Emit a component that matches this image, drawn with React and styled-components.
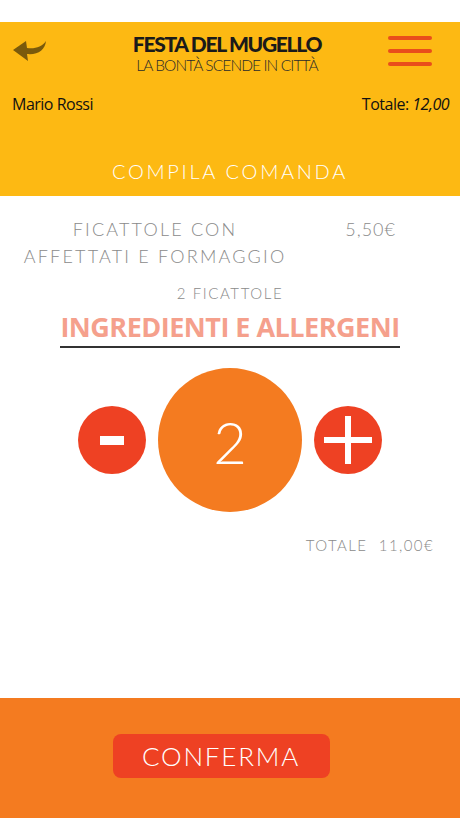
import React from "react";
import styled, { createGlobalStyle } from "styled-components";

const Global = createGlobalStyle`
  html, body { margin: 0; padding: 0; background: #fff; }
  body { font-family: "Lato", "Open Sans", sans-serif; }
  * { box-sizing: border-box; }
`;

const Screen = styled.div`
  width: 460px;
  height: 818px;
  display: flex;
  flex-direction: column;
  background: #fff;
  overflow: hidden;
`;

const StatusGap = styled.div`
  height: 22px;
  background: #fff;
`;

const Header = styled.header`
  height: 174px;
  background: #fdb913;
  display: flex;
  flex-direction: column;
`;

const TopBar = styled.div`
  display: flex;
  align-items: flex-start;
  justify-content: space-between;
  padding: 13px 28px 0 12px;
  height: 66px;
`;

const IconBtn = styled.div`
  width: ${(p) => p.$w}px;
  height: ${(p) => p.$h}px;
  margin-top: ${(p) => p.$mt || 0}px;
  display: flex;
`;

const Brand = styled.div`
  display: flex;
  flex-direction: column;
  align-items: center;
  margin-top: -1px;
  margin-left: 18px;
`;

const BrandTitle = styled.div`
  font-family: "Lato", sans-serif;
  font-weight: 900;
  font-size: 21px;
  letter-spacing: -1.3px;
  color: #1a1a1a;
  line-height: 20px;
`;

const BrandSub = styled.div`
  font-family: "Lato", sans-serif;
  font-weight: 300;
  font-size: 15.5px;
  letter-spacing: -0.9px;
  color: #2a2a2a;
  line-height: 16px;
  margin-top: 3px;
`;

const UserRow = styled.div`
  display: flex;
  justify-content: space-between;
  padding: 5px 11px 0 12px;
  font-family: "Open Sans", sans-serif;
  font-size: 16px;
  color: #111;
  letter-spacing: -0.5px;
`;

const Italic = styled.span`
  font-style: italic;
`;

const SectionTitle = styled.div`
  margin-top: auto;
  padding-bottom: 13px;
  text-align: center;
  color: #fff;
  font-family: "Lato", sans-serif;
  font-weight: 300;
  font-size: 20px;
  letter-spacing: 2.7px;
`;

const Body = styled.main`
  flex: 1;
  display: flex;
  flex-direction: column;
  align-items: center;
  color: #8a8a8a;
  font-family: "Lato", sans-serif;
  font-weight: 300;
`;

const ItemRow = styled.div`
  align-self: stretch;
  display: grid;
  grid-template-columns: 1fr auto;
  padding: 20px 64px 0 24px;
`;

const ItemName = styled.div`
  display: flex;
  flex-direction: column;
  align-items: center;
  width: 262px;
`;

const NameLine = styled.span`
  font-size: 18px;
  letter-spacing: 2.2px;
  line-height: 27px;
  white-space: nowrap;
`;

const Price = styled.div`
  font-size: 18px;
  letter-spacing: 1px;
  line-height: 27px;
`;

const Count = styled.div`
  font-size: 15px;
  letter-spacing: 1.6px;
  margin-top: 14px;
`;

const Link = styled.div`
  margin-top: 8px;
  font-family: "Open Sans", sans-serif;
  font-weight: 700;
  font-size: 27px;
  letter-spacing: -0.5px;
  color: #f5a08c;
  line-height: 34px;
  padding: 0 0 2px;
  border-bottom: 2px solid #333;
`;

const Stepper = styled.div`
  display: flex;
  align-items: center;
  gap: 12px;
  margin-top: 20px;
`;

const Round = styled.div`
  width: ${(p) => p.$size}px;
  height: ${(p) => p.$size}px;
  border-radius: 50%;
  background: ${(p) => p.$bg};
  display: flex;
  align-items: center;
  justify-content: center;
  color: #fff;
`;

const Qty = styled.span`
  font-family: "Lato", sans-serif;
  font-weight: 300;
  font-size: 58px;
  line-height: 1;
  color: #fff;
  margin-top: 4px;
`;

const Total = styled.div`
  align-self: flex-end;
  margin: 24px 26px 0 0;
  font-size: 15px;
  letter-spacing: 1.4px;
  word-spacing: 6px;
`;

const Footer = styled.footer`
  height: 120px;
  background: #f47b20;
  display: flex;
  justify-content: center;
  padding: 36px 18px 0 0;
`;

const Confirm = styled.button`
  width: 217px;
  height: 44px;
  border: none;
  border-radius: 8px;
  background: #ee4123;
  color: #fff;
  font-family: "Lato", sans-serif;
  font-weight: 300;
  font-size: 26px;
  letter-spacing: 1.8px;
  padding: 0;
`;

export default function App() {
  return (
    <>
      <Global />
      <Screen>
        <StatusGap />
        <Header>
          <TopBar>
            <IconBtn $w={36} $h={26} $mt={3}>
              <svg width="36" height="26" viewBox="0 0 36 26">
                <path
                  d="M34 3 C33 12 26 17 15 16 L16 23 L1 12 L14 3 L15 10 C23 11 30 9 34 3 Z"
                  fill="#7a5a0c"
                />
              </svg>
            </IconBtn>
            <Brand>
              <BrandTitle>FESTA DEL MUGELLO</BrandTitle>
              <BrandSub>LA BONTÀ SCENDE IN CITTÀ</BrandSub>
            </Brand>
            <IconBtn $w={44} $h={32} $mt={0}>
              <svg width="44" height="32" viewBox="0 0 44 32">
                <g stroke="#e94e1b" strokeWidth="4" strokeLinecap="round">
                  <line x1="2" y1="3" x2="42" y2="3" />
                  <line x1="2" y1="16" x2="42" y2="16" />
                  <line x1="2" y1="29" x2="42" y2="29" />
                </g>
              </svg>
            </IconBtn>
          </TopBar>
          <UserRow>
            <span>Mario Rossi</span>
            <span>
              Totale: <Italic>12,00</Italic>
            </span>
          </UserRow>
          <SectionTitle>COMPILA COMANDA</SectionTitle>
        </Header>
        <Body>
          <ItemRow>
            <ItemName>
              <NameLine>FICATTOLE CON</NameLine>
              <NameLine>AFFETTATI E FORMAGGIO</NameLine>
            </ItemName>
            <Price>5,50€</Price>
          </ItemRow>
          <Count>2 FICATTOLE</Count>
          <Link>INGREDIENTI E ALLERGENI</Link>
          <Stepper>
            <Round $size={68} $bg="#ee4123">
              <svg width="24" height="9" viewBox="0 0 24 9">
                <rect x="0" y="0" width="24" height="9" fill="#fff" />
              </svg>
            </Round>
            <Round $size={144} $bg="#f47b20">
              <Qty>2</Qty>
            </Round>
            <Round $size={68} $bg="#ee4123">
              <svg width="48" height="48" viewBox="0 0 48 48">
                <rect x="21" y="0" width="6" height="48" fill="#fff" />
                <rect x="0" y="21" width="48" height="6" fill="#fff" />
              </svg>
            </Round>
          </Stepper>
          <Total>TOTALE 11,00€</Total>
        </Body>
        <Footer>
          <Confirm>CONFERMA</Confirm>
        </Footer>
      </Screen>
    </>
  );
}
